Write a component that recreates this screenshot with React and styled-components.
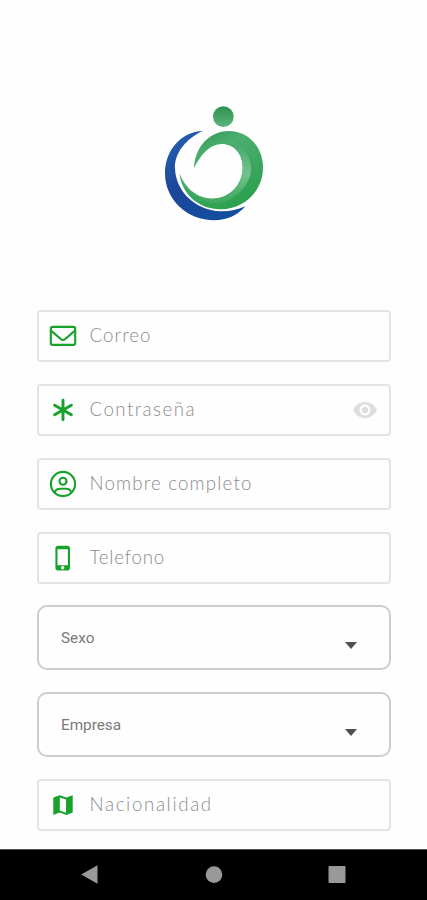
import React from 'react';
import styled, { createGlobalStyle } from 'styled-components';
import { MdRemoveRedEye } from 'react-icons/md';

const fields = {
  correo: { label: 'Correo', spacing: '1.05px' },
  contrasena: { label: 'Contraseña', spacing: '1.45px' },
  nombre: { label: 'Nombre completo', spacing: '1.17px' },
  telefono: { label: 'Telefono', spacing: '0.8px' },
  nacionalidad: { label: 'Nacionalidad', spacing: '1.65px' },
};

const Logo = () => (
  <LogoSvg viewBox="0 0 390 405">
    <defs>
      <linearGradient id="head" x1="0" y1="0" x2="0" y2="1">
        <stop offset="0" stopColor="#2c9350" />
        <stop offset="1" stopColor="#5cb57c" />
      </linearGradient>
      <linearGradient id="body" x1="0" y1="0" x2="0.5" y2="1">
        <stop offset="0" stopColor="#229049" />
        <stop offset="0.35" stopColor="#4cae70" />
        <stop offset="0.65" stopColor="#3fa765" />
        <stop offset="1" stopColor="#2da14d" />
      </linearGradient>
      <linearGradient id="shine" x1="0" y1="0" x2="0" y2="1">
        <stop offset="0" stopColor="#45a96a" />
        <stop offset="0.5" stopColor="#74c28f" />
        <stop offset="1" stopColor="#3da75e" />
      </linearGradient>
      <linearGradient id="moon" x1="0" y1="0" x2="0.7" y2="1">
        <stop offset="0" stopColor="#2765b3" />
        <stop offset="0.5" stopColor="#1c469a" />
        <stop offset="1" stopColor="#124d9f" />
      </linearGradient>
    </defs>
    <circle cx="220" cy="65" r="31" fill="url(#head)" />
    <path
      fill="url(#moon)"
      d="M158 108C94 110 45 165 45 235C45 315 112 376 193 376C229 376 263 361 286 334C253 348 225 352 193 347C127 337 77 284 75 220C73 174 108 132 158 108Z"
    />
    <path
      fill="url(#body)"
      d="M132 219C134 158 178 108 236 108C296 108 339 157 339 217C339 290 281 343 211 343C148 343 96 300 88 235C105 278 139 310 184 311C239 312 278 270 278 217C278 177 253 147 217 147C177 147 153 181 132 219Z"
    />
    <path
      fill="url(#shine)"
      d="M217 147C246 138 303 161 303 220C303 272 250 322 200 325C158 324 112 290 88 235C105 278 139 310 184 311C239 312 278 270 278 217C278 177 253 147 217 147Z"
    />
  </LogoSvg>
);

const MailIcon = () => (
  <Icon viewBox="0 0 28 28">
    <rect x="1.8" y="4.9" width="24.4" height="18" rx="1.8" />
    <path d="M2 8.6L11.8 17Q14 18.8 16.2 17L26 8.6" />
  </Icon>
);

const AsteriskIcon = () => (
  <Icon viewBox="0 0 28 28" $stroke={2.9}>
    <path d="M14 4.3V23.7M5.6 9.2L22.4 18.8M22.4 9.2L5.6 18.8" />
  </Icon>
);

const UserIcon = () => (
  <Icon viewBox="0 0 28 28">
    <circle cx="14" cy="14" r="12.1" />
    <circle cx="14" cy="11.2" r="3.5" />
    <path d="M5.6 22.4Q7 18.7 11 18.7H17Q21 18.7 22.4 22.4" />
  </Icon>
);

const PhoneIcon = () => (
  <Icon viewBox="0 0 28 28">
    <path
      fill="#18a12b"
      fillRule="evenodd"
      stroke="none"
      d="M9 1.8H18.4Q21 1.8 21 4.4V23.8Q21 26.4 18.4 26.4H9Q6.4 26.4 6.4 23.8V4.4Q6.4 1.8 9 1.8ZM8.5 5.3V21.2H18.9V5.3ZM12 23.7A1.7 1.7 0 1 0 15.4 23.7A1.7 1.7 0 1 0 12 23.7Z"
    />
  </Icon>
);

const MapIcon = () => (
  <Icon viewBox="0 0 28 28">
    <path
      fill="#18a12b"
      fillRule="evenodd"
      stroke="none"
      d="M4.3 6.5L10.8 4.2L17.5 6.5L23.7 4.2V21.5L17.5 24L10.8 21.6L4.3 24ZM10.8 6.5V19.6L17 21.8V8.6Z"
    />
  </Icon>
);

const Field = ({ icon, field, secure }) => (
  <FieldContainer>
    {icon}
    <FieldLabel $spacing={field.spacing}>{field.label}</FieldLabel>
    {secure && <MdRemoveRedEye size={26} color="#dedede" />}
  </FieldContainer>
);

const Select = ({ label }) => (
  <SelectContainer>
    <SelectLabel>{label}</SelectLabel>
    <Caret />
  </SelectContainer>
);

const App = () => {
  return (
    <Screen>
      <GlobalStyle />
      <Content>
        <LogoWrapper>
          <Logo />
        </LogoWrapper>

        <Form>
          <Field icon={<MailIcon />} field={fields.correo} />
          <Field icon={<AsteriskIcon />} field={fields.contrasena} secure />
          <Field icon={<UserIcon />} field={fields.nombre} />
          <Field icon={<PhoneIcon />} field={fields.telefono} />
          <Select label="Sexo" />
          <Select label="Empresa" />
          <Field icon={<MapIcon />} field={fields.nacionalidad} />
        </Form>
      </Content>

      <NavBar>
        <NavIcon viewBox="0 0 20 20">
          <path d="M1.2 9.5L17.5 0.3V18.7Z" />
        </NavIcon>
        <NavIcon viewBox="0 0 20 20">
          <circle cx="10" cy="9.6" r="8.3" />
        </NavIcon>
        <NavIcon viewBox="0 0 20 20">
          <rect x="1.5" y="1" width="17" height="17" rx="1" />
        </NavIcon>
      </NavBar>
    </Screen>
  );
};

const GlobalStyle = createGlobalStyle`
  body {
    margin: 0;
    background: #fff;
  }

  * {
    box-sizing: border-box;
  }
`;

const Screen = styled.div`
  width: 427px;
  height: 900px;
  display: flex;
  flex-direction: column;
  overflow: hidden;
  background: #fefefe;
`;

const Content = styled.div`
  flex: 1;
  padding: 0 36px 0 37px;
`;

const LogoWrapper = styled.div`
  height: 310px;
  padding: 95px 0 0 113px;
`;

const LogoSvg = styled.svg`
  display: block;
  width: 130px;
  height: 135px;
`;

const Form = styled.div`
  display: flex;
  flex-direction: column;
  gap: 21.85px;
`;

const FieldContainer = styled.div`
  height: 52px;
  display: flex;
  align-items: center;
  padding: 0 11px 0 10px;
  border: 2px solid #e4e4e4;
  border-radius: 4px;
`;

const FieldLabel = styled.span`
  flex: 1;
  margin: 0 0 2px 12.5px;
  font-family: Lato, 'Open Sans', sans-serif;
  font-size: 18.7px;
  font-weight: 300;
  line-height: 24px;
  letter-spacing: ${props => props.$spacing};
  color: #8c8c8c;
  white-space: nowrap;
`;

const Icon = styled.svg`
  flex: none;
  width: 28px;
  height: 28px;
  fill: none;
  stroke: #18a12b;
  stroke-width: ${props => props.$stroke || 2.1};
  stroke-linecap: round;
  stroke-linejoin: round;
`;

const SelectContainer = styled.div`
  height: 65px;
  display: flex;
  align-items: center;
  justify-content: space-between;
  padding: 0 32px 0 22px;
  border: 2px solid #cdcdcd;
  border-radius: 10px;
`;

const SelectLabel = styled.span`
  font-family: Roboto, sans-serif;
  font-size: 15.3px;
  line-height: 20px;
  color: #7a7a7a;
`;

const Caret = styled.span`
  margin-top: 16px;
  border: 6.5px solid transparent;
  border-top: 7px solid #505050;
  border-bottom: 0;
`;

const NavBar = styled.div`
  height: 51px;
  display: flex;
  align-items: center;
  justify-content: space-between;
  padding: 0 80px;
  border-top: 1px solid #555;
  background: #000;
`;

const NavIcon = styled.svg`
  width: 20px;
  height: 20px;
  fill: #999;
`;

export default App;
